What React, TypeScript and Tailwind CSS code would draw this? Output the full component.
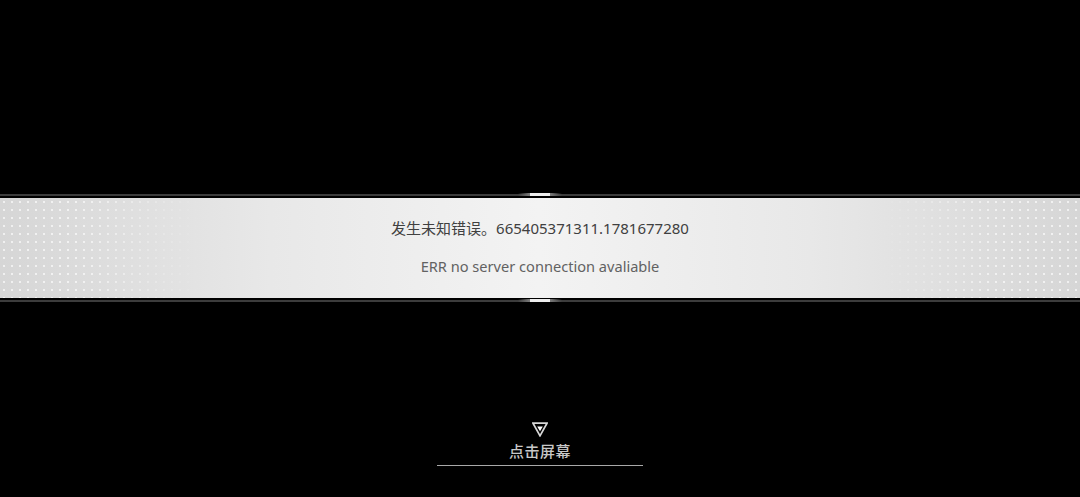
import React from 'react'

const font = { fontFamily: '"Noto Sans", "Noto Sans CJK SC", sans-serif' }

function EdgeLine() {
  return (
    <div className="relative h-[2px] bg-[#3c3c3c]">
      {/* center notch */}
      <div className="absolute left-[518px] top-[-1px] h-[3px] w-[44px] bg-[linear-gradient(to_right,transparent,#777_25%,#777_75%,transparent)]" />
      <div className="absolute left-[530px] top-[-1px] h-[3px] w-[20px] bg-[#eeeeee]" />
    </div>
  )
}

function Dots({ side }: { side: 'left' | 'right' }) {
  return (
    <div
      className={
        'w-[200px] h-full bg-[radial-gradient(circle,rgba(255,255,255,0.9)_0.8px,transparent_1.2px)] bg-[length:8px_8px] opacity-70 ' +
        (side === 'left'
          ? '[mask-image:linear-gradient(to_right,black_40%,transparent)]'
          : '[mask-image:linear-gradient(to_left,black_40%,transparent)]')
      }
    />
  )
}

export default function App() {
  return (
    <div className="h-[497px] w-full bg-black flex flex-col overflow-hidden" style={font}>
      <div className="h-[194px]" />
      <EdgeLine />
      <div className="h-[2px]" />
      <div className="h-[100px] flex bg-[linear-gradient(to_right,#d6d6d6,#e8e8e8_25%,#f3f3f3_50%,#e8e8e8_75%,#d6d6d6)]">
        <Dots side="left" />
        <div className="flex-1 flex flex-col items-center">
          <div className="mt-[19px] text-[15px] leading-[22px] text-[#404040]">
            发生未知错误。665405371311.1781677280
          </div>
          <div className="mt-[16px] text-[14.6px] leading-[22px] text-[#626262]">
            ERR no server connection avaliable
          </div>
        </div>
        <Dots side="right" />
      </div>
      <div className="h-[2px]" />
      <EdgeLine />
      <div className="flex flex-col items-center">
        <svg className="mt-[120px]" width="16" height="15" viewBox="0 0 16 15">
          <path d="M1 1.2 H15 L8 13.8 Z" fill="none" stroke="#d8d8d8" strokeWidth="1.7" strokeLinejoin="miter" />
          <path d="M5.2 4.6 H10.8 L8 9.2 Z" fill="#ffffff" />
        </svg>
        <div className="mt-[4px] text-[15px] leading-[20px] font-medium text-[#c8c8c8] tracking-[0.5px]">点击屏幕</div>
        <div className="mt-[4px] h-px w-[206px] bg-[#a8a8a8]" />
      </div>
    </div>
  )
}
